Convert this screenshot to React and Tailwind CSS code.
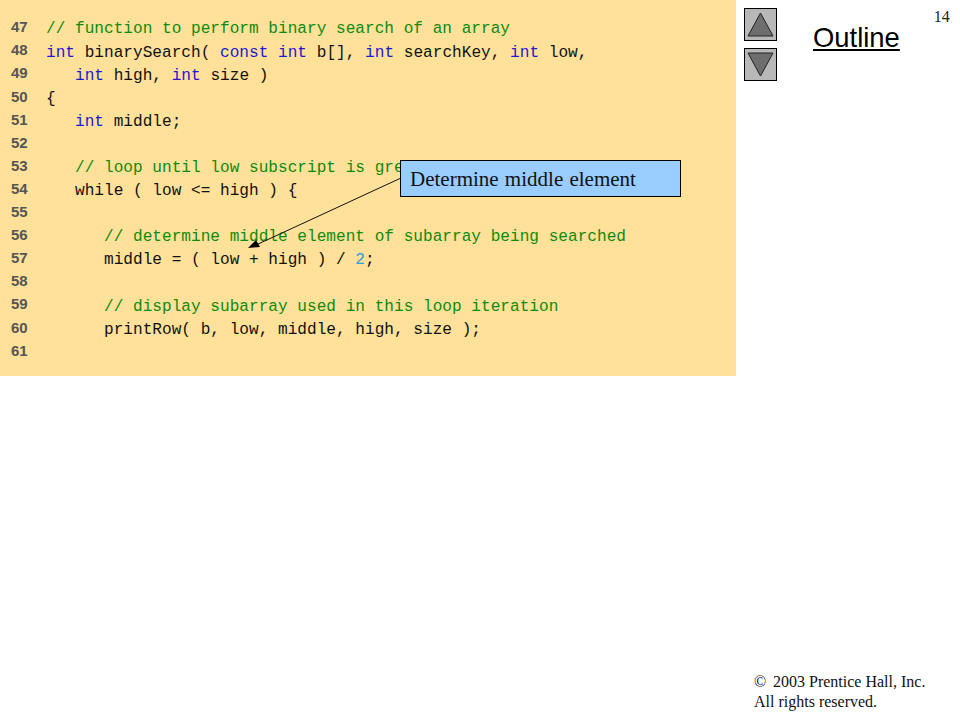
import React from "react";

const B = ({ children }) => <span className="text-[#1a1ad0]">{children}</span>;
const G = ({ children }) => <span className="text-[#0f8a0f]">{children}</span>;

const lines = [
  [47, <G>{"// function to perform binary search of an array"}</G>],
  [48, <><B>int</B>{" binarySearch( "}<B>const int</B>{" b[], "}<B>int</B>{" searchKey, "}<B>int</B>{" low,"}</>],
  [49, <>{"   "}<B>int</B>{" high, "}<B>int</B>{" size )"}</>],
  [50, "{"],
  [51, <>{"   "}<B>int</B>{" middle;"}</>],
  [52, ""],
  [53, <G>{"   // loop until low subscript is gre"}</G>],
  [54, "   while ( low <= high ) {"],
  [55, ""],
  [56, <G>{"      // determine middle element of subarray being searched"}</G>],
  [57, <>{"      middle = ( low + high ) / "}<span className="text-[#2f9be0]">2</span>{";"}</>],
  [58, ""],
  [59, <G>{"      // display subarray used in this loop iteration"}</G>],
  [60, "      printRow( b, low, middle, high, size );"],
  [61, ""],
];

const NavButton = ({ up }) => (
  <div className="w-[33px] h-[33px] border border-black bg-[#b8b8b8] flex items-center justify-center">
    <svg width="27" height="27" viewBox="0 0 27 27">
      <polygon
        points={up ? "13.5,2 26,25 1,25" : "1,2 26,2 13.5,25"}
        fill="#6e6e6e"
        stroke="#222"
        strokeWidth="1"
      />
    </svg>
  </div>
);

export default function App() {
  return (
    <div className="relative w-[960px] h-[720px] bg-white overflow-hidden flex font-['Liberation_Serif',serif]">
      <div className="w-[736px] h-[376px] bg-[#ffe199] pt-[17px] shrink-0">
        {lines.map(([n, code]) => (
          <div key={n} className="flex h-[23.1px] items-center">
            <span className="w-[46px] pl-[11px] pb-[2px] shrink-0 text-[15px] font-bold text-[#555] font-['Liberation_Sans',sans-serif]">
              {n}
            </span>
            <span className="whitespace-pre pt-[2px] text-[16.13px] text-[#111] font-['Liberation_Mono',monospace]">
              {code}
            </span>
          </div>
        ))}
      </div>

      <div className="flex-1 flex flex-col relative">
        <div className="flex pl-[8px] pt-[8px]">
          <div className="flex flex-col gap-[7px]">
            <NavButton up />
            <NavButton />
          </div>
          <span className="ml-[36px] mt-[12px] h-[35px] text-[27.4px] leading-[35px] underline text-black font-['Liberation_Sans',sans-serif]">
            Outline
          </span>
          <span className="ml-[34px] text-[16px] leading-[18px] text-[#222]">14</span>
        </div>
        <div className="mt-auto pl-[18px] pb-[8px] text-[16px] leading-[20px] text-[#111]">
          <div>
            <span className="inline-block w-[19px]">©</span>2003 Prentice Hall, Inc.
          </div>
          <div>All rights reserved.</div>
        </div>
      </div>

      {/* callout over the code */}
      <svg className="absolute left-0 top-0" width="960" height="720">
        <line x1="401" y1="178" x2="256" y2="245" stroke="#111" strokeWidth="1" />
        <polygon points="248,248 256,240 260,247" fill="#000" />
      </svg>
      <div className="absolute left-[400px] top-[160px] w-[281px] h-[37px] border border-black bg-[#99ccff] pl-[9px] text-[21px] [word-spacing:1px] leading-[36px] text-[#111]">
        Determine middle element
      </div>
    </div>
  );
}
